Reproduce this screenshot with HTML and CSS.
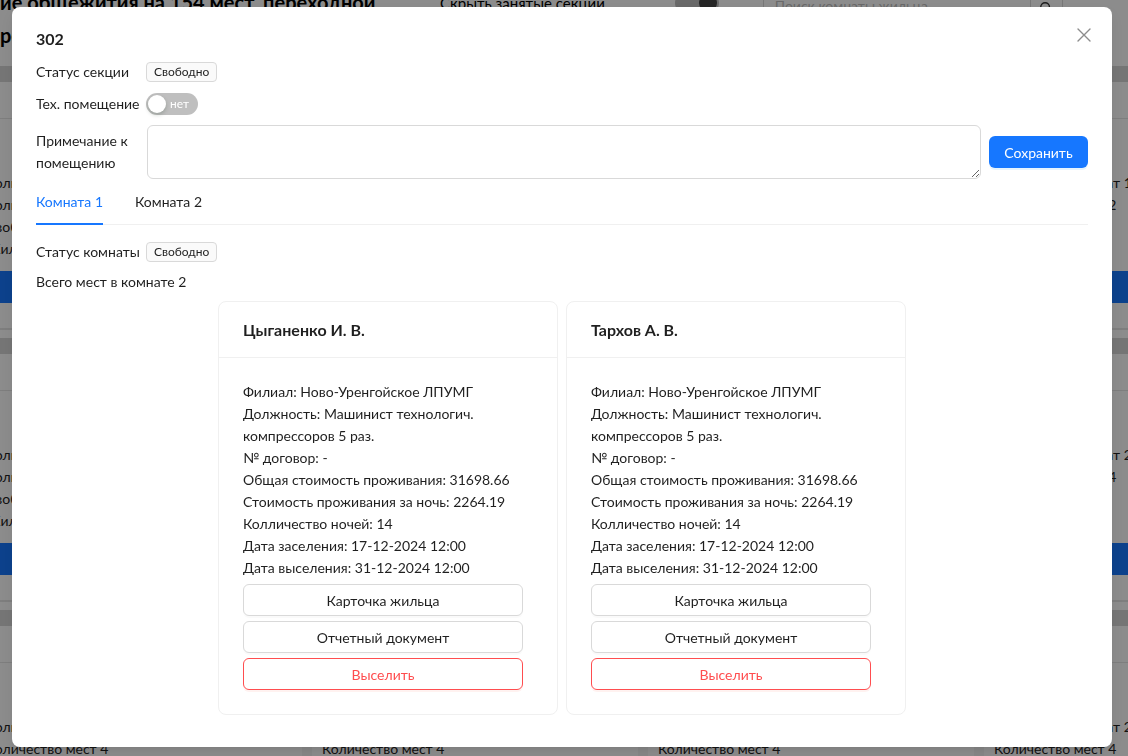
FILE: index.html
```html
<!DOCTYPE html>
<html lang="ru">
<head>
<meta charset="utf-8">
<title>302</title>
<link rel="stylesheet" href="styles.css">
</head>
<body>
<div class="page">
  <header class="page-head">
    <h1 class="page-title">ие общежития на 154 мест, переходной<br>ремонтного фонда</h1>
    <div class="filter"><span>Скрыть занятые секции</span><span class="bg-switch"><span class="bg-knob"></span></span></div>
    <div class="search">
      <span class="search-input">Поиск комнаты жильца</span>
      <span class="search-btn"><svg width="14" height="14" viewBox="0 0 16 16"><circle cx="7" cy="7" r="5" fill="none" stroke="#333" stroke-width="1.6"/><path d="M11 11l3.5 3.5" stroke="#333" stroke-width="1.6"/></svg></span>
    </div>
  </header>
  <div class="sections">
    <div class="sec"><div class="sec-band"></div><div class="sec-div"></div><div class="sec-text"><p>Количество комнат 1</p><p>Количество мест 2</p><p>Свободно мест 2</p><p>Жильцов 0</p></div><div class="sec-btn"></div></div>
    <div class="sec"><div class="sec-band"></div><div class="sec-div"></div><div class="sec-text"><p>Количество комнат 1</p><p>Количество мест 2</p><p>Свободно мест 2</p><p>Жильцов 0</p></div><div class="sec-btn"></div></div>
    <div class="sec"><div class="sec-band"></div><div class="sec-div"></div><div class="sec-text"><p>Количество комнат 1</p><p>Количество мест 2</p><p>Свободно мест 2</p><p>Жильцов 0</p></div><div class="sec-btn"></div></div>
    <div class="sec"><div class="sec-band"></div><div class="sec-div"></div><div class="sec-text"><p>Количество комнат 1</p><p>Количество мест 2</p><p>Свободно мест 2</p><p>Жильцов 0</p></div><div class="sec-btn"></div></div>
    <div class="sec"><div class="sec-band"></div><div class="sec-div"></div><div class="sec-text"><p>Количество комнат 2</p><p>Количество мест 4</p><p>Свободно мест 4</p><p>Жильцов 0</p></div><div class="sec-btn"></div></div>
    <div class="sec"><div class="sec-band"></div><div class="sec-div"></div><div class="sec-text"><p>Количество комнат 2</p><p>Количество мест 4</p><p>Свободно мест 4</p><p>Жильцов 0</p></div><div class="sec-btn"></div></div>
    <div class="sec"><div class="sec-band"></div><div class="sec-div"></div><div class="sec-text"><p>Количество комнат 2</p><p>Количество мест 4</p><p>Свободно мест 4</p><p>Жильцов 0</p></div><div class="sec-btn"></div></div>
    <div class="sec"><div class="sec-band"></div><div class="sec-div"></div><div class="sec-text"><p>Количество комнат 2</p><p>Количество мест 4</p><p>Свободно мест 4</p><p>Жильцов 0</p></div><div class="sec-btn"></div></div>
    <div class="sec"><div class="sec-band"></div><div class="sec-div"></div><div class="sec-text"><p>Количество комнат 2</p><p>Количество мест 4</p><p>Свободно мест 4</p><p>Жильцов 0</p></div><div class="sec-btn"></div></div>
    <div class="sec"><div class="sec-band"></div><div class="sec-div"></div><div class="sec-text"><p>Количество комнат 2</p><p>Количество мест 4</p><p>Свободно мест 4</p><p>Жильцов 0</p></div><div class="sec-btn"></div></div>
    <div class="sec"><div class="sec-band"></div><div class="sec-div"></div><div class="sec-text"><p>Количество комнат 2</p><p>Количество мест 4</p><p>Свободно мест 4</p><p>Жильцов 0</p></div><div class="sec-btn"></div></div>
    <div class="sec"><div class="sec-band"></div><div class="sec-div"></div><div class="sec-text"><p>Количество комнат 2</p><p>Количество мест 4</p><p>Свободно мест 4</p><p>Жильцов 0</p></div><div class="sec-btn"></div></div>
  </div>
</div>

<div class="mask">
  <div class="modal">
    <button class="modal-close" aria-label="Закрыть">
      <svg width="14" height="14" viewBox="0 0 14 14"><path d="M1 1L13 13M13 1L1 13" stroke="currentColor" stroke-width="1.4" stroke-linecap="round"/></svg>
    </button>
    <div class="modal-title">302</div>

    <div class="form-row row-status">
      <span class="label">Статус секции</span>
      <span class="tag">Свободно</span>
    </div>
    <div class="form-row row-tech">
      <span class="label">Тех. помещение</span>
      <span class="switch"><span class="switch-knob"></span><span class="switch-text">нет</span></span>
    </div>
    <div class="form-row row-note">
      <span class="label label-wrap">Примечание к помещению</span>
      <textarea class="note"></textarea>
      <button class="btn-primary">Сохранить</button>
    </div>

    <div class="tabs">
      <div class="tab active">Комната 1</div>
      <div class="tab">Комната 2</div>
    </div>

    <div class="form-row row-room">
      <span class="label">Статус комнаты</span>
      <span class="tag">Свободно</span>
    </div>
    <div class="total">Всего мест в комнате 2</div>

    <div class="cards">
      <div class="card">
        <div class="card-head">Цыганенко И. В.</div>
        <div class="card-body">
          <p>Филиал: Ново-Уренгойское ЛПУМГ</p>
          <p>Должность: Машинист технологич. компрессоров 5 раз.</p>
          <p>№ договор: -</p>
          <p>Общая стоимость проживания: 31698.66</p>
          <p>Стоимость проживания за ночь: 2264.19</p>
          <p>Колличество ночей: 14</p>
          <p>Дата заселения: 17-12-2024 12:00</p>
          <p>Дата выселения: 31-12-2024 12:00</p>
          <div class="card-actions">
            <button class="btn">Карточка жильца</button>
            <button class="btn">Отчетный документ</button>
            <button class="btn btn-danger">Выселить</button>
          </div>
        </div>
      </div>
      <div class="card">
        <div class="card-head">Тархов А. В.</div>
        <div class="card-body">
          <p>Филиал: Ново-Уренгойское ЛПУМГ</p>
          <p>Должность: Машинист технологич. компрессоров 5 раз.</p>
          <p>№ договор: -</p>
          <p>Общая стоимость проживания: 31698.66</p>
          <p>Стоимость проживания за ночь: 2264.19</p>
          <p>Колличество ночей: 14</p>
          <p>Дата заселения: 17-12-2024 12:00</p>
          <p>Дата выселения: 31-12-2024 12:00</p>
          <div class="card-actions">
            <button class="btn">Карточка жильца</button>
            <button class="btn">Отчетный документ</button>
            <button class="btn btn-danger">Выселить</button>
          </div>
        </div>
      </div>
    </div>
  </div>
</div>
</body>
</html>
```
FILE: styles.css
```css
* { box-sizing: border-box; }
html, body { margin: 0; padding: 0; }
body {
  width: 1128px;
  height: 756px;
  overflow: hidden;
  background: #f5f5f5;
  font-family: Lato, "Noto Sans", sans-serif;
  font-size: 14px;
  color: rgba(0,0,0,0.88);
}

/* ---------- background page ---------- */
.page { width: 1128px; height: 756px; overflow: hidden; }
.page-head {
  display: flex;
  align-items: flex-start;
  height: 72px;
  margin-top: -14px;
  background: #fff;
}
.page-title {
  width: 430px;
  margin: 0;
  font-size: 20px;
  line-height: 33px;
  font-weight: 700;
  color: #000;
  white-space: nowrap;
  overflow: hidden;
}
.filter {
  display: flex;
  align-items: center;
  gap: 70px;
  margin-left: 10px;
  padding-top: 6px;
  font-size: 15px;
  color: #000;
}
.bg-switch {
  width: 44px; height: 22px; border-radius: 11px;
  background: #bfbfbf; display: flex; align-items: center; justify-content: flex-end; padding: 2px;
}
.bg-knob { width: 18px; height: 18px; border-radius: 50%; background: #444; }
.search { display: flex; margin-left: 44px; padding-top: 6px; }
.search-input {
  width: 268px; height: 32px; border: 1px solid #d9d9d9; border-radius: 6px 0 0 6px;
  padding: 4px 11px; color: #bfbfbf; background: #fff; font-size: 14px;
}
.search-btn {
  width: 32px; height: 32px; border: 1px solid #d9d9d9; border-left: none; border-radius: 0 6px 6px 0;
  display: flex; align-items: center; justify-content: center; background: #fff;
}
.sections {
  display: flex;
  flex-wrap: wrap;
  column-gap: 10px;
  width: 1400px;
  margin-left: -24px;
}
.sec {
  width: 326px;
  height: 272px;
  background: #fff;
  border-bottom: 2px solid #e6e6e6;
  display: flex;
  flex-direction: column;
  padding-top: 8px;
}
.sec-band { height: 16px; background: #d6d6d6; }
.sec-div { height: 1px; background: #e6e6e6; margin-top: 36px; }
.sec-text { padding: 0 10px; margin-top: 53px; color: #222; }
.sec-text p { margin: 0; line-height: 22px; white-space: nowrap; }
.sec-btn { height: 32px; background: #1677ff; border-radius: 6px; margin: 11px 10px 0; }

/* ---------- modal ---------- */
.mask {
  position: fixed;
  inset: 0;
  background: rgba(0,0,0,0.45);
  padding: 7px 0 0 12px;
}
.modal {
  position: relative;
  width: 1100px;
  background: #fff;
  border-radius: 8px;
  padding: 20px 24px 32px;
  box-shadow: 0 6px 16px rgba(0,0,0,0.08), 0 3px 6px -4px rgba(0,0,0,0.12);
}
.modal-close {
  position: absolute;
  top: 17px;
  right: 17px;
  width: 22px;
  height: 22px;
  border: none;
  background: transparent;
  padding: 0;
  display: flex;
  align-items: center;
  justify-content: center;
  color: rgba(0,0,0,0.45);
}
.modal-title {
  font-size: 16px;
  line-height: 24px;
  font-weight: 700;
  margin-bottom: 8px;
}
.form-row { display: flex; align-items: center; }
.label { width: 110px; flex: none; padding-right: 8px; line-height: 22px; white-space: nowrap; }
.label-wrap { white-space: normal; }
.row-status { height: 26px; margin-bottom: 6px; }
.row-tech { height: 26px; margin-bottom: 8px; }
.row-note { height: 54px; }
.row-room { height: 22px; margin-bottom: 8px; }
.tag {
  display: inline-block;
  height: 20px;
  line-height: 18px;
  padding: 0 7px;
  font-size: 12px;
  background: #fafafa;
  border: 1px solid #d9d9d9;
  border-radius: 4px;
}
.switch {
  position: relative;
  display: inline-flex;
  align-items: center;
  height: 22px;
  min-width: 51px;
  border-radius: 11px;
  background: rgba(0,0,0,0.25);
  padding: 0 9px 0 24px;
}
.switch-knob {
  position: absolute;
  left: 2px;
  top: 2px;
  width: 18px;
  height: 18px;
  border-radius: 50%;
  background: #fff;
  box-shadow: 0 2px 4px rgba(0,35,11,0.2);
}
.switch-text { color: #fff; font-size: 12px; line-height: 22px; }
.note {
  flex: 1;
  height: 54px;
  margin: 0 0 0 1px;
  border: 1px solid #d9d9d9;
  border-radius: 6px;
  padding: 4px 11px;
  font: inherit;
  resize: vertical;
}
.btn-primary {
  margin-left: 8px;
  width: 99px;
  height: 32px;
  padding: 0;
  border: none;
  border-radius: 6px;
  background: #1677ff;
  color: #fff;
  font: inherit;
  box-shadow: 0 2px 0 rgba(5,145,255,0.1);
}
.tabs {
  display: flex;
  gap: 32px;
  border-bottom: 1px solid #f0f0f0;
  margin-bottom: 16px;
}
.tab {
  padding: 12px 0 10px;
  line-height: 22px;
  margin-bottom: -1px;
  border-bottom: 2px solid transparent;
}
.tab.active { color: #1677ff; border-bottom-color: #1677ff; }
.total { line-height: 22px; margin-bottom: 8px; }
.cards { display: flex; justify-content: center; gap: 8px; }
.card {
  width: 340px;
  border: 1px solid #f0f0f0;
  border-radius: 8px;
}
.card-head {
  height: 56px;
  padding: 0 24px;
  display: flex;
  align-items: center;
  font-size: 16px;
  font-weight: 700;
  border-bottom: 1px solid #f0f0f0;
}
.card-body { padding: 23px 34px 24px 24px; }
.card-body p { margin: 0; line-height: 22px; }
.card-actions { display: flex; flex-direction: column; gap: 5px; margin-top: 5px; }
.btn {
  width: 280px;
  height: 32px;
  border: 1px solid #d9d9d9;
  border-radius: 6px;
  background: #fff;
  color: rgba(0,0,0,0.88);
  font: inherit;
  box-shadow: 0 2px 0 rgba(0,0,0,0.02);
}
.btn-danger { border-color: #ff4d4f; color: #ff4d4f; box-shadow: 0 2px 0 rgba(255,38,5,0.06); }
```
